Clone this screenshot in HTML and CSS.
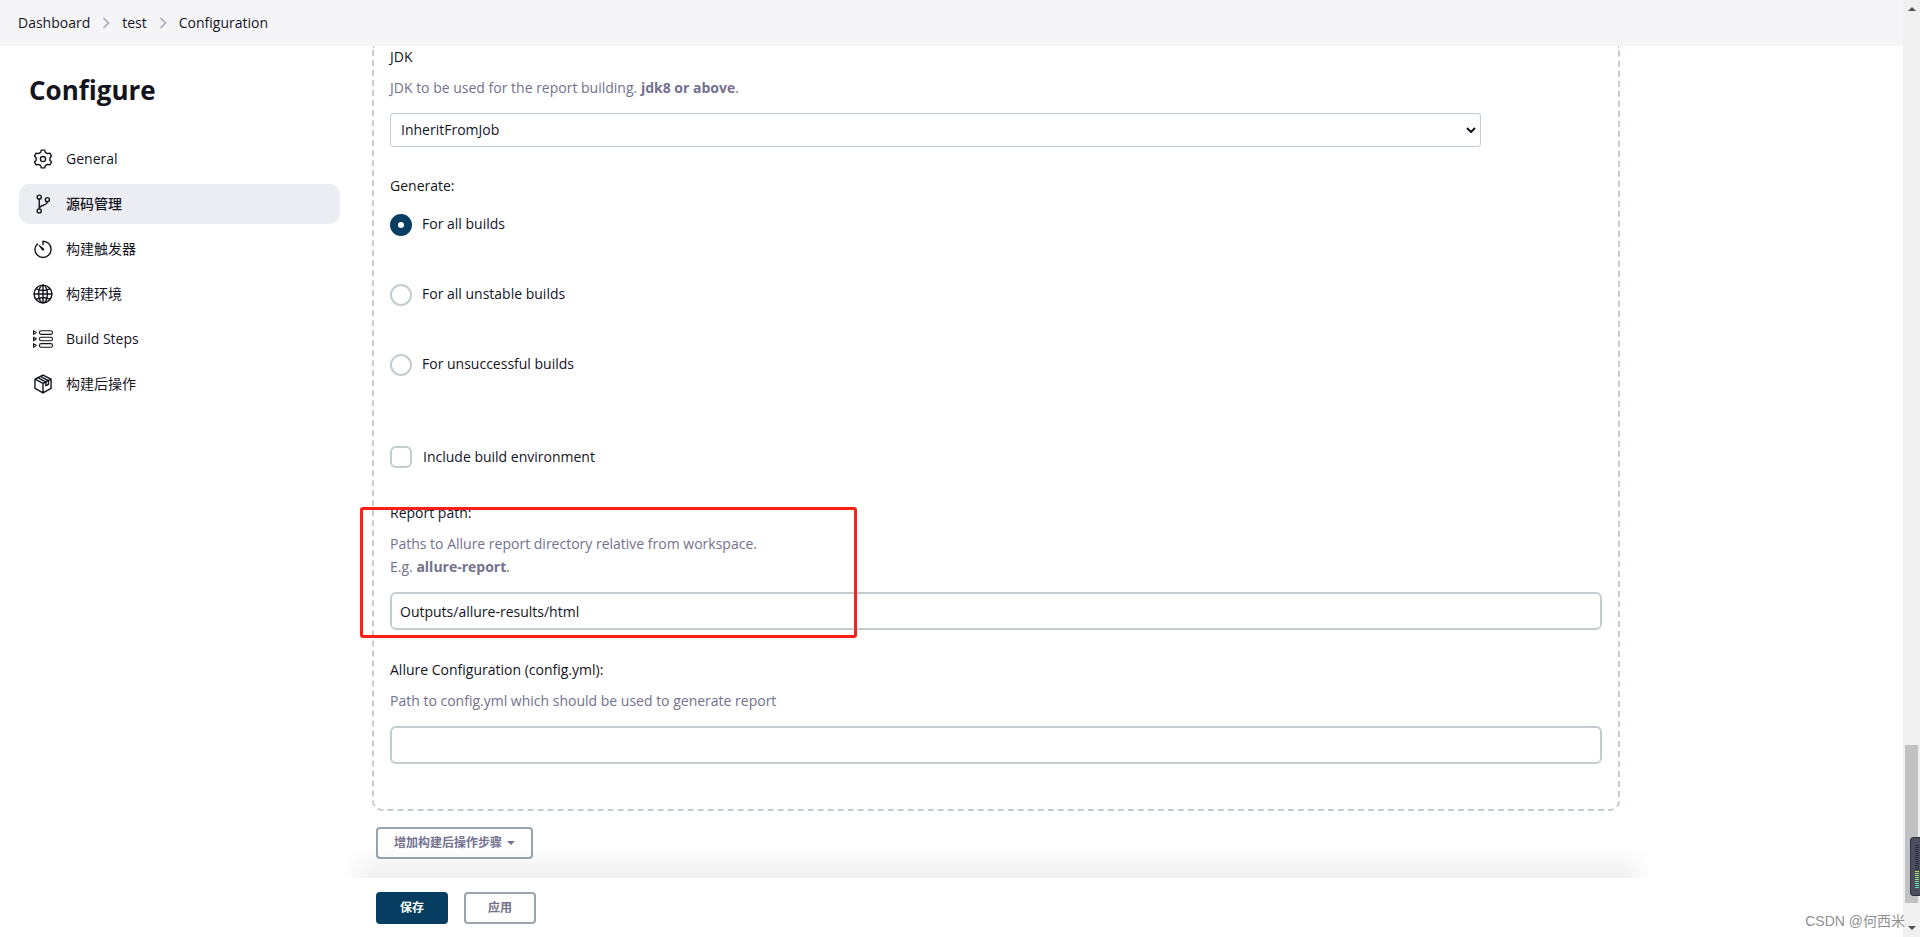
FILE: index.html
```html
<!DOCTYPE html>
<html lang="zh-CN">
<head>
<meta charset="utf-8">
<title>test Config [Jenkins]</title>
<link rel="stylesheet" href="styles.css">
</head>
<body>
<div class="window">
  <div class="page">
    <header class="topbar">
      <nav class="crumbs" aria-label="Breadcrumb">
        <a href="#">Dashboard</a>
        <svg class="chevron" viewBox="0 0 8 12"><path d="M1.500 1l5 5-5 5"/></svg>
        <a href="#">test</a>
        <svg class="chevron" viewBox="0 0 8 12"><path d="M1.500 1l5 5-5 5"/></svg>
        <a href="#">Configuration</a>
      </nav>
    </header>
    <div class="body">
      <aside class="sidebar">
        <h1>Configure</h1>
        <nav class="tasks">
          <a class="task" href="#">
            <svg class="icon" viewBox="0 0 512 512"><circle cx="256" cy="256" r="66"/><path d="M212 28H300L315 86L374 120L431 104L475 180L433 222V290L475 332L431 408L374 392L315 426L300 484H212L197 426L138 392L81 408L37 332L79 290V222L37 180L81 104L138 120L197 86Z"/></svg>
            <span>General</span>
          </a>
          <a class="task active" href="#">
            <svg class="icon" viewBox="0 0 512 512"><circle cx="160" cy="80" r="52"/><circle cx="160" cy="432" r="52"/><circle cx="368" cy="144" r="52"/><path d="M160 128v256M368 192c0 128-208 64-208 192"/></svg>
            <span>源码管理</span>
          </a>
          <a class="task" href="#">
            <svg class="icon" viewBox="0 0 512 512"><path d="M112.900 128.900C81 162 48 205 48 264c0 114 94 208 208 208s208-94 208-208S370 56 256 56v84"/><path class="solid" d="M233 287l-93-124c-7-10 4-22 15-15l124 93a32 32 0 01-46 46z"/></svg>
            <span>构建触发器</span>
          </a>
          <a class="task" href="#">
            <svg class="icon" viewBox="0 0 512 512"><circle cx="256" cy="256" r="228"/><ellipse cx="256" cy="256" rx="112" ry="228"/><path d="M28 256h456M256 28v456M88 124c98 48 238 48 336 0M88 388c98-48 238-48 336 0"/></svg>
            <span>构建环境</span>
          </a>
          <a class="task" href="#">
            <svg class="icon thin" viewBox="0 0 512 512"><rect x="166" y="46" width="332" height="92" rx="40"/><rect x="166" y="210" width="332" height="92" rx="40"/><rect x="166" y="374" width="332" height="92" rx="40"/><path d="M14 46l72 46-72 46zM14 210l72 46-72 46zM14 374l72 46-72 46z"/></svg>
            <span>Build Steps</span>
          </a>
          <a class="task" href="#">
            <svg class="icon" viewBox="0 0 512 512"><path d="M256 26l206 104v240L256 486 50 370V130zM50 130l206 112 206-112M256 242v244M120 92l208 110M190 58l206 110v96l-66 36v-96"/></svg>
            <span>构建后操作</span>
          </a>
        </nav>
      </aside>
      <main class="content">
        <section class="step">
          <label class="title" for="jdk">JDK</label>
          <p class="help">JDK to be used for the report building. <b>jdk8 or above</b>.</p>
          <div class="select-wrap">
            <select id="jdk"><option>InheritFromJob</option></select>
            <svg class="caret" viewBox="0 0 10 6"><path d="M1 1l4 4 4-4"/></svg>
          </div>
          <fieldset class="choices">
            <legend class="title">Generate:</legend>
            <label class="choice radio"><input type="radio" name="policy" checked><span>For all builds</span></label>
            <label class="choice radio"><input type="radio" name="policy"><span>For all unstable builds</span></label>
            <label class="choice radio"><input type="radio" name="policy"><span>For unsuccessful builds</span></label>
          </fieldset>
          <label class="choice include"><input type="checkbox"><span>Include build environment</span></label>
          <div class="field marked">
            <label class="title" for="report">Report path:</label>
            <p class="help">Paths to Allure report directory relative from workspace.<br>E.g. <b>allure-report</b>.</p>
            <input class="text" id="report" type="text" value="Outputs/allure-results/html">
            <div class="marker"></div>
          </div>
          <div class="field">
            <label class="title" for="config">Allure Configuration (config.yml):</label>
            <p class="help">Path to config.yml which should be used to generate report</p>
            <input class="text" id="config" type="text">
          </div>
        </section>
        <button class="button add" type="button">增加构建后操作步骤<i class="triangle"></i></button>
        <footer class="actions">
          <button class="button primary" type="submit">保存</button>
          <button class="button" type="button">应用</button>
        </footer>
      </main>
    </div>
  </div>
  <div class="scrollbar">
    <i class="arrow up"></i>
    <div class="track"><div class="thumb"></div></div>
    <i class="arrow down"></i>
  </div>
  <div class="meter"><i class="off"></i><i class="on"></i></div>
  <div class="watermark">CSDN @何西米</div>
</div>
</body>
</html>
```
FILE: styles.css
```css
* { box-sizing: border-box; }

body {
  margin: 0;
  background: #fff;
  color: #14141f;
  font: 14px/22px "Open Sans", "Noto Sans CJK SC", sans-serif;
}

a { color: inherit; text-decoration: none; }
p, h1, fieldset { margin: 0; padding: 0; border: 0; }
button, input, select { font: inherit; color: inherit; margin: 0; }

.window { position: relative; display: flex; height: 100vh; overflow: hidden; }
.page { flex: 1; display: flex; flex-direction: column; min-width: 0; }

.topbar { background: #f5f5f8; padding: 12px 18px; }
.crumbs { display: flex; align-items: center; gap: 12px; }
.chevron { width: 8px; height: 12px; fill: none; stroke: #a5a3b8; stroke-width: 1.5; }

.body { flex: 1; display: flex; min-height: 0; }

.sidebar { width: 372px; flex: none; padding: 24px 32px 0 19px; }
.sidebar h1 { padding-left: 10px; font-size: 26px; line-height: 40px; font-weight: 700; }
.tasks { display: flex; flex-direction: column; gap: 5px; margin-top: 29px; }
.task { display: flex; align-items: center; gap: 13px; height: 40px; padding: 0 14px; border-radius: 10px; }
.task.active { background: #ecedf3; font-weight: 500; }
.icon { width: 20px; height: 20px; fill: none; stroke: #14141f; stroke-width: 36; stroke-linejoin: round; stroke-linecap: round; overflow: visible; }
.icon.thin { stroke-width: 28; }
.icon .solid { fill: #14141f; stroke: none; }

.content { flex: 1; display: flex; flex-direction: column; align-items: flex-start; min-width: 0; padding-right: 283px; }
.step { align-self: stretch; padding: 0 16px 45px; border: 2px dashed #c3ccd1; border-top: 0; border-radius: 0 0 10px 10px; }
.title { display: block; padding: 0; }
.help { margin: 8px 0 14px; line-height: 23px; color: #73718e; }

.select-wrap { position: relative; width: 90%; }
.select-wrap select { display: block; width: 100%; height: 34px; padding: 0 10px; appearance: none; border: 1px solid #c3ccd1; border-radius: 3px; background: #fff; }
.caret { position: absolute; right: 5px; top: 14px; width: 10px; height: 6px; fill: none; stroke: #14141f; stroke-width: 2; pointer-events: none; }

.choices { display: flex; flex-direction: column; gap: 48px; margin-top: 28px; }
.choices legend { margin-bottom: 17px; }
.choice { display: flex; align-items: center; gap: 11px; }
.choice.radio { align-items: flex-start; gap: 10px; line-height: 20px; }
.choice input { appearance: none; width: 22px; height: 22px; border: 2px solid #c3ccd1; border-radius: 50%; background: #fff; }
.choice input[type="checkbox"] { border-radius: 6px; }
.choice input:checked { border: 8px solid #063d61; }
.include { margin-top: 70px; }

.field { margin-top: 29px; }
.field.marked { position: relative; margin-top: 34px; }
.text { display: block; width: 100%; height: 38px; padding: 0 8px; border: 2px solid #c3ccd1; border-radius: 6px; background: #fff; }
.marker { position: absolute; left: -30px; top: 5px; width: 497px; height: 131px; border: 3px solid #ff2015; border-radius: 3px; pointer-events: none; }

.button { height: 32px; min-width: 72px; padding: 0 16px; border: 2px solid #98a5b0; border-radius: 4px; background: #fff; color: #73718e; font-size: 12px; line-height: 16px; font-weight: 700; }
.button.primary { background: #063d61; border-color: #063d61; color: #fff; }
.add { margin: 16px 0 0 4px; display: flex; align-items: center; gap: 5px; }
.triangle { border: 4px solid transparent; border-top-color: currentColor; border-bottom: 0; }

.actions { position: relative; align-self: stretch; display: flex; gap: 16px; margin-top: auto; padding: 14px 4px 13px; }
.actions::before { content: ""; position: absolute; left: -28px; right: -32px; bottom: 100%; height: 32px; background: linear-gradient(to top, rgba(0, 0, 0, 0.06), transparent); mask-image: linear-gradient(to right, transparent, #000 28px, #000 calc(100% - 28px), transparent); pointer-events: none; }

.scrollbar { width: 17px; flex: none; display: flex; flex-direction: column; align-items: center; padding: 7px 0; background: #f0f0f0; }
.track { flex: 1; align-self: stretch; display: flex; flex-direction: column; justify-content: flex-end; padding: 0 2px 23px; }
.thumb { height: 158px; background: #c1c1c1; }
.arrow { border: 4px solid transparent; }
.arrow.up { border-top: 0; border-bottom-color: #505050; }
.arrow.down { border-bottom: 0; border-top-color: #505050; }

.meter { position: absolute; right: 0; bottom: 41px; width: 10px; height: 59px; padding: 7px 1px 6px 4px; display: flex; flex-direction: column; background: #4b4f60; border: 1px solid #2a2f3d; border-right: 0; border-radius: 4px 0 0 4px; }
.meter i { width: 4px; }
.off { height: 26px; background: repeating-linear-gradient(#2a2f3d 0 1px, transparent 1px 2px); }
.on { flex: 1; background: repeating-linear-gradient(transparent 0 1px, #4b4f60 1px 2px), linear-gradient(#b5e04c, #4be0c0); }
.watermark { position: absolute; right: 15px; bottom: 5px; color: #909090; font: 14px/22px "Liberation Sans", "Noto Sans CJK SC", sans-serif; }
```
